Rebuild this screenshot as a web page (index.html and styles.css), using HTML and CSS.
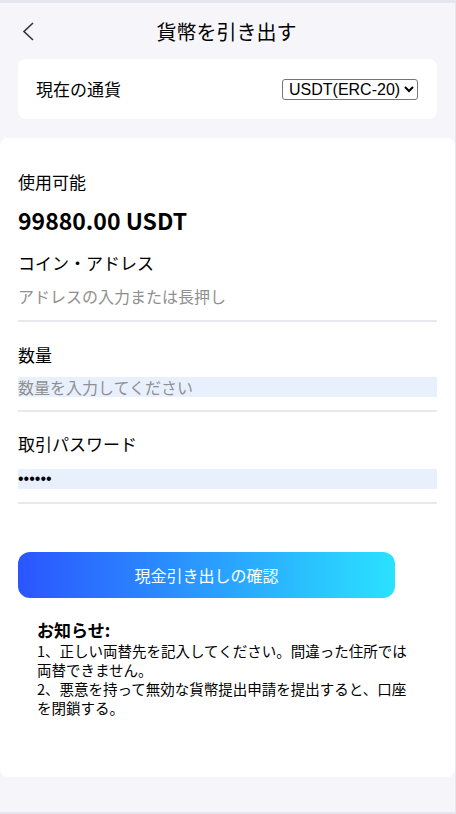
FILE: index.html
```html
<!DOCTYPE html>
<html lang="ja">
<head>
    <meta charset="UTF-8">
    <meta name="viewport" content="width=device-width, initial-scale=1.0">
    <title>貨幣を引き出す</title>
    <link rel="stylesheet" href="styles.css">
</head>
<body>
    <div class="page">
        <div class="topbar">
            <a class="back" href="#">
                <svg width="14" height="22" viewBox="0 0 14 22"><path d="M11 2 L2 10.5 L11 19" fill="none" stroke="#333" stroke-width="1.6"/></svg>
            </a>
            <h1 class="title">貨幣を引き出す</h1>
        </div>

        <div class="currency">
            <span class="currency-label">現在の通貨</span>
            <select class="currency-select">
                <option>USDT(ERC-20)</option>
                <option>USDT(TRC-20)</option>
            </select>
        </div>

        <div class="main">
            <div class="label first">使用可能</div>
            <div class="amount">99880.00 USDT</div>

            <div class="label addr-label">コイン・アドレス</div>
            <input class="plain-input" type="text" placeholder="アドレスの入力または長押し">
            <hr class="line">

            <div class="label">数量</div>
            <input class="fill-input" type="text" placeholder="数量を入力してください">
            <hr class="line">

            <div class="label pass-label">取引パスワード</div>
            <input class="fill-input pass" type="password" value="123456">
            <hr class="line">

            <button class="confirm" type="button">現金引き出しの確認</button>

            <div class="notice">
                <h2>お知らせ:</h2>
                <p>1、正しい両替先を記入してください。間違った住所では両替できません。</p>
                <p>2、悪意を持って無効な貨幣提出申請を提出すると、口座を閉鎖する。</p>
            </div>
        </div>
    </div>
</body>
</html>
```

FILE: styles.css
```css
body {
    margin: 0;
    font-family: "Noto Sans CJK JP", "Noto Sans", sans-serif;
    color: #000;
}

.page {
    box-sizing: border-box;
    width: 456px;
    height: 814px;
    background-color: #f6f6fa;
    border-top: 3px solid #e6e7ee;
    border-right: 1px solid #e6e7ee;
    border-bottom: 2px solid #e6e7ee;
}

.topbar {
    position: relative;
    height: 56px;
    display: flex;
    align-items: center;
    justify-content: center;
}

.back {
    position: absolute;
    left: 22px;
    top: 18px;
    display: block;
    line-height: 0;
}

.title {
    margin: 0;
    font-size: 20px;
    font-weight: normal;
    line-height: 28px;
    padding-top: 1px;
    padding-right: 2px;
}

.currency {
    margin: 0 18px;
    height: 60px;
    padding: 0 18px;
    background: #fff;
    border-radius: 8px;
    display: flex;
    align-items: center;
    justify-content: space-between;
}

.currency-label {
    font-size: 17px;
    line-height: 24px;
}

.currency-select {
    font-family: "Liberation Sans", Arial, sans-serif;
    font-size: 16px;
    height: 21px;
    padding: 0 0 0 2px;
    border: 1px solid #767676;
    border-radius: 3px;
    background: #fff;
    color: #000;
    margin-right: 1px;
}

.main {
    margin-top: 19px;
    height: 639px;
    box-sizing: border-box;
    padding: 0 18px;
    background: #fff;
    border-radius: 8px;
    overflow: hidden;
}

.label {
    font-size: 17px;
    line-height: 24px;
    margin-top: 21px;
}

.label.first {
    margin-top: 0;
    padding-top: 32px;
}

.label.addr-label {
    margin-top: 16px;
}

.label.pass-label {
    margin-top: 20px;
}

.amount {
    font-size: 23px;
    font-weight: bold;
    line-height: 30px;
    margin-top: 11px;
}

input {
    display: block;
    box-sizing: border-box;
    width: 100%;
    border: none;
    outline: none;
    padding: 0;
    font-family: "Noto Sans CJK JP", sans-serif;
    font-size: 16px;
    color: #000;
}

input::placeholder {
    color: #909090;
}

.plain-input {
    height: 22px;
    margin-top: 10px;
    background: transparent;
}

.fill-input {
    height: 20px;
    margin-top: 10px;
    background: #e8f0fe;
}

.fill-input.pass {
    margin-top: 13px;
    font-family: "Liberation Sans", sans-serif;
    font-size: 16px;
}

.line {
    margin: 13px 0 0;
    border: none;
    height: 2px;
    background: #e8e8ee;
}

.fill-input + .line {
    margin-top: 13px;
}

.confirm {
    display: block;
    width: 377px;
    height: 46px;
    margin-top: 48px;
    border: none;
    border-radius: 12px;
    background: linear-gradient(90deg, #2b55ff 0%, #2ae2ff 100%);
    color: #fff;
    font-family: "Noto Sans CJK JP", sans-serif;
    font-size: 16px;
    cursor: pointer;
}

.notice {
    margin-top: 21px;
    padding-left: 19px;
    width: 376px;
}

.notice h2 {
    margin: 0;
    font-size: 17px;
    line-height: 22px;
    font-weight: bold;
}

.notice p {
    margin: 0;
    font-size: 14.5px;
    line-height: 19px;
}
```
